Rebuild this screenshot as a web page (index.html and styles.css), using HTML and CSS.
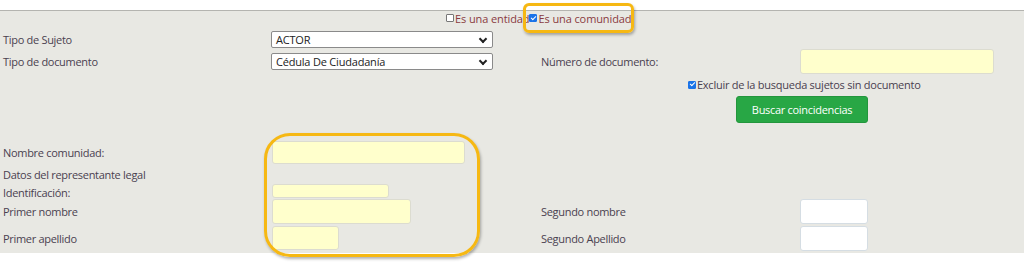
FILE: index.html
```html
<!DOCTYPE html>
<html lang="es">
<head>
<meta charset="UTF-8">
<meta name="viewport" content="width=device-width, initial-scale=1.0">
<link rel="stylesheet" href="styles.css">
<title>Búsqueda de sujetos</title>
</head>
<body>
<div class="topbar"></div>
<div class="panel">
  <div class="kind-row">
    <label class="kind"><span class="chk"></span>Es una entidad</label>
    <label class="kind"><span class="chk on"></span>Es una comunidad</label>
  </div>

  <div class="row r-sujeto">
    <div class="lbl">Tipo de Sujeto</div>
    <div class="sel">ACTOR<span class="caret"></span></div>
  </div>
  <div class="row r-doc">
    <div class="lbl">Tipo de documento</div>
    <div class="sel">Cédula De Ciudadanía<span class="caret"></span></div>
    <div class="lbl lbl2">Número de documento:</div>
    <div class="inp yellow w-num"></div>
  </div>
  <div class="row r-excl">
    <label class="excl"><span class="chk on"></span>Excluir de la busqueda sujetos sin documento</label>
  </div>
  <div class="row r-btn">
    <button class="btn">Buscar coincidencias</button>
  </div>

  <div class="row r-nombre">
    <div class="lbl">Nombre comunidad:</div>
    <div class="inp yellow w-nombre"></div>
  </div>
  <div class="row r-datos">
    <div class="lbl">Datos del representante legal</div>
  </div>
  <div class="row r-ident">
    <div class="lbl">Identificación:</div>
    <div class="inp yellow w-ident"></div>
  </div>
  <div class="row r-primer">
    <div class="lbl">Primer nombre</div>
    <div class="inp yellow w-pnombre"></div>
    <div class="lbl lbl2">Segundo nombre</div>
    <div class="inp white w-seg"></div>
  </div>
  <div class="row r-apellido">
    <div class="lbl">Primer apellido</div>
    <div class="inp yellow w-papellido"></div>
    <div class="lbl lbl2">Segundo Apellido</div>
    <div class="inp white w-seg"></div>
  </div>
</div>

<div class="mark mark-top"></div>
<div class="mark mark-form"></div>
</body>
</html>
```

FILE: styles.css
```css
html, body {
  margin: 0;
  padding: 0;
  background: #fff;
}
body {
  position: relative;
  width: 1024px;
  height: 264px;
  overflow: hidden;
  font-family: "Open Sans", "Noto Sans", sans-serif;
  font-size: 11px;
  letter-spacing: -0.3px;
  color: #4a4150;
}
.topbar {
  height: 10px;
  border-bottom: 1px solid #b4b4b0;
}
.panel {
  background: #e8e8e3;
  height: 242px;
}

.kind-row {
  display: flex;
  padding-left: 446px;
  height: 14px;
  margin-bottom: 4px;
  align-items: center;
  color: #8a3b3f;
  font-size: 11px;
  letter-spacing: -0.1px;
}
.kind {
  display: flex;
  align-items: center;
}
.chk {
  display: inline-block;
  width: 6px;
  height: 6px;
  border: 1px solid #777;
  border-radius: 1px;
  background: #fff;
  margin-right: 1px;
  position: relative;
}
.chk.on {
  background: #1a73e8;
  border-color: #1a73e8;
}
.chk.on::after {
  content: "";
  position: absolute;
  left: 1.5px;
  top: -0.5px;
  width: 2px;
  height: 4px;
  border: solid #fff;
  border-width: 0 1.5px 1.5px 0;
  transform: rotate(45deg);
}

.row {
  display: flex;
  align-items: center;
}
.lbl {
  width: 268px;
  padding-left: 3px;
  box-sizing: border-box;
  white-space: nowrap;
}
.row .lbl2 {
  width: 259px;
  padding-left: 0;
}

.sel {
  width: 222px;
  height: 17px;
  box-sizing: border-box;
  border: 1px solid #8a8a8a;
  border-radius: 2px;
  background: #fff;
  color: #222;
  padding-left: 4px;
  line-height: 15px;
  letter-spacing: -0.2px;
  position: relative;
  margin-right: 48px;
  margin-left: 3px;
}
.caret {
  position: absolute;
  right: 6px;
  top: 4px;
  width: 4px;
  height: 4px;
  border: solid #222;
  border-width: 0 2px 2px 0;
  transform: rotate(45deg);
}

.inp {
  box-sizing: border-box;
  border: 1px solid #dcdcd0;
  border-radius: 3px;
  margin-left: 4px;
}
.yellow { background: #ffffcc; }
.white { background: #fff; border-color: #d5dde3; }
.row .inp.white { margin-left: 0; }
.w-num { width: 194px; height: 25px; margin-left: 0; }
.w-nombre { width: 193px; height: 23px; }
.w-ident { width: 117px; height: 14px; }
.w-pnombre { width: 139px; height: 25px; margin-right: 130px; }
.w-papellido { width: 67px; height: 24px; margin-right: 202px; }
.w-seg { width: 68px; height: 25px; }

.r-sujeto { height: 20px; }
.r-doc { height: 25px; }
.r-excl {
  height: 21px;
  padding-left: 688px;
}
.excl {
  display: flex;
  align-items: center;
  font-size: 11px;
  letter-spacing: -0.25px;
}
.r-btn {
  height: 28px;
  padding-left: 736px;
  align-items: flex-start;
}
.btn {
  width: 132px;
  height: 27px;
  margin-top: 1px;
  background: #28a745;
  border: 1px solid #23963d;
  border-radius: 3px;
  color: #fff;
  font-family: "Open Sans", "Noto Sans", sans-serif;
  font-size: 11px;
  letter-spacing: -0.3px;
  padding: 0;
}
.r-nombre { height: 23px; margin-top: 18px; }
.r-datos { height: 19px; padding-top: 2px; box-sizing: border-box; }
.r-ident { height: 15px; }
.r-ident .lbl { padding-top: 4px; }
.r-primer { height: 25px; margin-top: 1px; }
.r-apellido { height: 24px; margin-top: 2px; }

.mark {
  position: absolute;
  border: 3px solid #f6b813;
  box-shadow: 1px 2px 3px rgba(0, 0, 0, 0.3);
}
.mark-top {
  left: 523px;
  top: 3px;
  width: 105px;
  height: 24px;
  border-radius: 6px;
}
.mark-form {
  left: 264px;
  top: 133px;
  width: 210px;
  height: 118px;
  border-radius: 26px;
}
```
